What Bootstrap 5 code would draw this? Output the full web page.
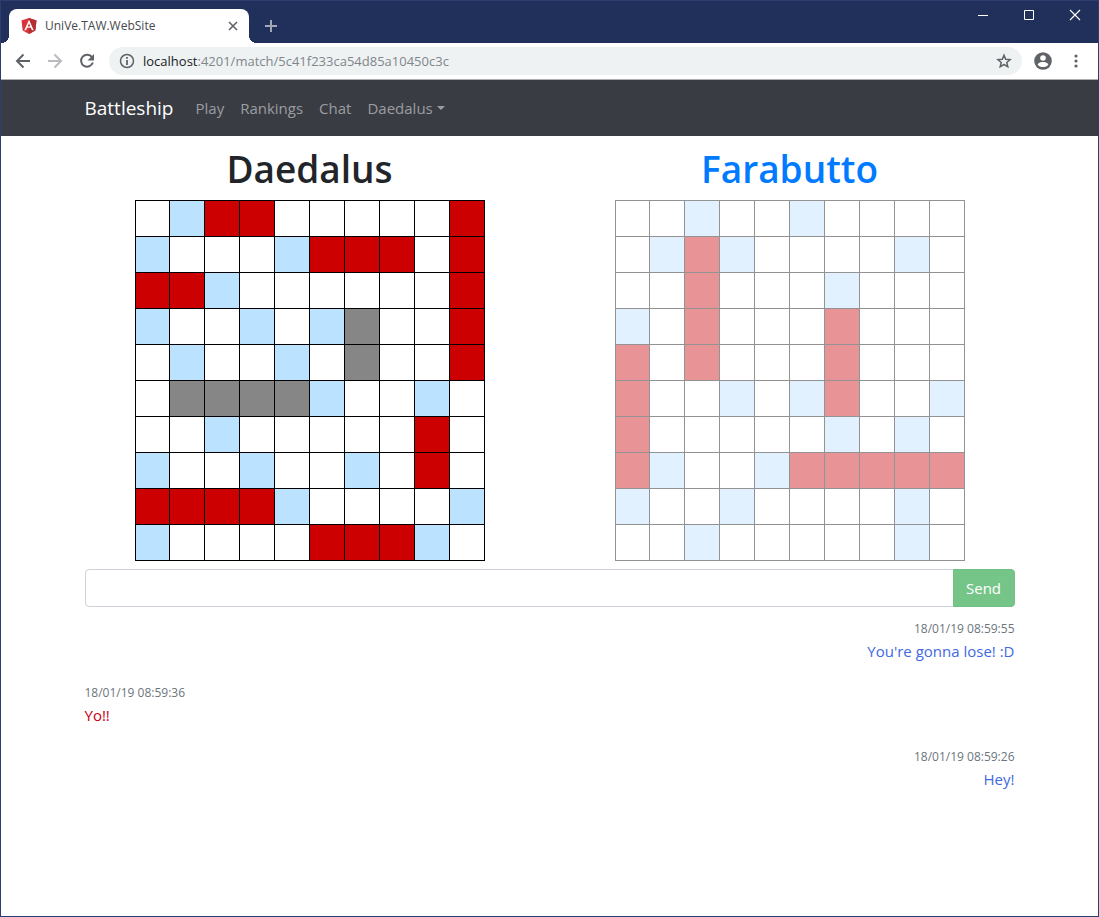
<!DOCTYPE html>
<html lang="en">
<head>
<meta charset="utf-8">
<meta name="viewport" content="width=device-width, initial-scale=1">
<title>UniVe.TAW.WebSite</title>
<link href="https://cdn.jsdelivr.net/npm/bootstrap@5.3.0/dist/css/bootstrap.min.css" rel="stylesheet">
<style>
  body { font-family: "Open Sans", "Noto Sans", sans-serif; font-size: 15px; line-height: 24px; color: #212529; }
  .window-frame { border: 1px solid #2c3d70; min-height: 100vh; }
  .titlebar { background: #212f5b; height: 42px; padding: 8px 8px 0; }
  .browser-tab { position: relative; width: 240px; height: 34px; border-radius: 8px 8px 0 0; padding: 0 10px 0 12px; font-size: 12px; color: #45494d; }
  .browser-tab::before, .browser-tab::after { content: ""; position: absolute; bottom: 0; width: 8px; height: 8px; }
  .browser-tab::before { left: -8px; background: radial-gradient(circle at 0 0, transparent 8px, #fff 8px); }
  .browser-tab::after { right: -8px; background: radial-gradient(circle at 100% 0, transparent 8px, #fff 8px); }
  .chrome-btn { border: 0; padding: 0; background: none; display: flex; flex: none; }
  .window-buttons { gap: 30px; height: 16px; padding-right: 7px; margin-top: -2px; }
  .toolbar { height: 37px; padding: 0 14px; border-bottom: 1px solid #adaeaf; }
  .address { height: 28px; margin: 0 12px 0 14px; border-radius: 14px; background: #eef2f3; padding: 0 10px; font-size: 13px; color: #80868b; }
  .address .host { color: #202124; }
  .page-col { max-width: 960px; padding: 0 15px; }
  .boards { --bs-gutter-x: 30px; }
  .site-nav { background: #393c43; min-height: 56px; }
  .site-nav .navbar-brand { font-size: 19px; line-height: 30px; color: #fff; margin-right: 14px; }
  .site-nav .nav-link { color: #9c9da1; }
  .player-name { font-size: 37px; line-height: 50px; font-weight: 600; margin-bottom: 6px; }
  .rival { color: #007bff; }
  .sea { border-collapse: collapse; table-layout: fixed; width: 350px; --line: #000; --water: #bbe3ff; --hit: #c00; --ship: #868686; }
  .sea td { height: 36px; padding: 0; border: 1px solid var(--line); }
  .sea td:first-child { width: 34px; }
  .sea-rival { --line: #939393; --water: #e1f1ff; --hit: #e89496; }
  .water { background: var(--water); }
  .hit { background: var(--hit); }
  .ship { background: var(--ship); }
  .chat-form .form-control { height: 38px; border-color: #ced4da; border-radius: 4px; }
  .chat-form .btn { width: 62px; padding: 0; font-size: 15px; border-radius: 4px; color: #fff; background: #76c588; border: 1px solid #6fc183; }
  .stamp { font-size: 12px; line-height: 1; color: #6c757d; }
  .mine { color: #4169e1; }
  .theirs { color: #c80010; }
</style>
</head>
<body>
<div class="window-frame">
  <header>
    <div class="titlebar d-flex">
      <div class="browser-tab bg-white d-flex align-items-center">
        <svg class="me-2" width="16" height="16" viewBox="0 0 16 16"><path fill="#dd3139" d="M8 0l7.500 2.600-1.200 10L8 16l-6.300-3.400L.5 2.600z"/><path fill="#b52e31" d="M8 0l7.500 2.600-1.200 10L8 16z"/><path fill="#fff" fill-rule="evenodd" d="M8 1.800L3.300 12.200h1.800l1-2.400h3.800l1 2.400h1.800zM8 5.200l1.300 3.200H6.700z"/></svg>
        <span class="flex-grow-1">UniVe.TAW.WebSite</span>
        <button class="chrome-btn" aria-label="Close tab"><svg width="12" height="12" viewBox="0 0 12 12" fill="none" stroke="#5f6368" stroke-width="1.600"><path d="M2 2l8 8M10 2l-8 8"/></svg></button>
      </div>
      <button class="chrome-btn align-items-center ms-3" aria-label="New tab"><svg width="12" height="12" viewBox="0 0 12 12" fill="none" stroke="#a3a8b5" stroke-width="2"><path d="M6 0v12M0 6h12"/></svg></button>
      <div class="window-buttons d-flex ms-auto">
        <button class="chrome-btn" aria-label="Minimize"><svg width="16" height="16" viewBox="0 0 16 16" stroke="#fff"><path d="M3 8.500h10"/></svg></button>
        <button class="chrome-btn" aria-label="Maximize"><svg width="16" height="16" viewBox="0 0 16 16" fill="none" stroke="#fff"><path d="M3.500 3.500h9v9h-9z"/></svg></button>
        <button class="chrome-btn" aria-label="Close"><svg width="16" height="16" viewBox="0 0 16 16" fill="none" stroke="#fff" stroke-width="1.200"><path d="M3 3l10 10M13 3L3 13"/></svg></button>
      </div>
    </div>
    <div class="toolbar bg-white d-flex align-items-center">
      <button class="chrome-btn me-3" aria-label="Back"><svg width="16" height="16" viewBox="0 0 16 16" fill="none" stroke="#5f6368" stroke-width="2"><path d="M15 8H2.500M8.500 1.500L2 8l6.500 6.500"/></svg></button>
      <button class="chrome-btn me-3" aria-label="Forward"><svg width="16" height="16" viewBox="0 0 16 16" fill="none" stroke="#b9bbbe" stroke-width="2"><path d="M1 8h12.500M7.500 1.500L14 8l-6.500 6.500"/></svg></button>
      <button class="chrome-btn" aria-label="Reload"><svg width="16" height="16" viewBox="0 0 16 16"><path fill="none" stroke="#5f6368" stroke-width="2" d="M13 4.200A6 6 0 1 0 13.800 9.500"/><path fill="#5f6368" d="M15 1v6.500H8.500z"/></svg></button>
      <div class="address d-flex align-items-center flex-grow-1">
        <svg class="me-2" width="16" height="16" viewBox="0 0 16 16"><circle cx="8" cy="8" r="6.500" fill="none" stroke="#5f6368" stroke-width="1.500"/><path fill="#5f6368" d="M7.100 7h1.800v5H7.100zM7.100 4h1.800v1.800H7.100z"/></svg>
        <span class="flex-grow-1"><span class="host">localhost</span>:4201/match/5c41f233ca54d85a10450c3c</span>
        <button class="chrome-btn" aria-label="Bookmark"><svg width="16" height="16" viewBox="0 0 16 16" fill="none" stroke="#5f6368" stroke-width="1.500"><path d="M8 2.200l1.700 4 4.400.4-3.300 2.900 1 4.300L8 11.500l-3.800 2.300 1-4.300-3.300-2.900 4.400-.4z"/></svg></button>
      </div>
      <button class="chrome-btn" aria-label="Profile"><svg width="18" height="18" viewBox="0 0 18 18"><circle cx="9" cy="9" r="8.800" fill="#5f6368"/><circle cx="9" cy="6" r="2.800" fill="#fff"/><path fill="#fff" d="M3.600 12.400C4.500 10.600 7.200 10 9 10s4.500.6 5.400 2.400C13.200 14.200 11.200 15 9 15s-4.200-.8-5.400-2.600z"/></svg></button>
      <button class="chrome-btn ms-3" aria-label="Menu"><svg width="16" height="16" viewBox="0 0 16 16" fill="#5f6368"><circle cx="8" cy="3" r="1.600"/><circle cx="8" cy="8" r="1.600"/><circle cx="8" cy="13" r="1.600"/></svg></button>
    </div>
  </header>

  <nav class="navbar navbar-expand site-nav py-2">
    <div class="container page-col">
      <a class="navbar-brand py-0" href="#">Battleship</a>
      <ul class="navbar-nav me-auto">
        <li class="nav-item"><a class="nav-link" href="#">Play</a></li>
        <li class="nav-item"><a class="nav-link" href="#">Rankings</a></li>
        <li class="nav-item"><a class="nav-link" href="#">Chat</a></li>
        <li class="nav-item dropdown"><a class="nav-link dropdown-toggle" href="#" role="button" data-bs-toggle="dropdown" aria-expanded="false">Daedalus</a></li>
      </ul>
    </div>
  </nav>

  <main class="container page-col pt-2">
    <div class="row boards">
      <section class="col-6">
        <h1 class="player-name text-center">Daedalus</h1>
        <table class="sea mx-auto mb-2" aria-label="Daedalus board" data-rows=".wrr.....r w...wrrr.r rrw......r w..w.wg..r .w..w.g..r .ggggw..w. ..w.....r. w..w..w.r. rrrrw....w w....rrrw."></table>
      </section>
      <section class="col-6">
        <h1 class="player-name rival text-center">Farabutto</h1>
        <table class="sea sea-rival mx-auto mb-2" aria-label="Farabutto board" data-rows="..w..w.... .wrw....w. ..r...w... w.r...r... r.r...r... r..w.wr..w r.....w.w. rw..wrrrrr w..w....w. ..w.....w."></table>
      </section>
    </div>
    <form class="chat-form input-group mb-2">
      <input type="text" class="form-control" aria-label="Message">
      <button type="button" class="btn">Send</button>
    </form>
    <div class="text-end mb-3"><div><span class="stamp">18/01/19 08:59:55</span></div><div class="mine">You're gonna lose! :D</div></div>
    <div class="mb-3"><div><span class="stamp">18/01/19 08:59:36</span></div><div class="theirs">Yo!!</div></div>
    <div class="text-end mb-3"><div><span class="stamp">18/01/19 08:59:26</span></div><div class="mine">Hey!</div></div>
  </main>
</div>
<script src="https://cdn.jsdelivr.net/npm/bootstrap@5.3.0/dist/js/bootstrap.bundle.min.js"></script>
<script>
  // w = missed shot, r = hit, g = ship still afloat
  const kinds = { w: "water", r: "hit", g: "ship" };
  document.querySelectorAll(".sea").forEach(table => {
    table.dataset.rows.split(" ").forEach(cells => {
      const row = table.insertRow();
      for (const c of cells) row.insertCell().className = kinds[c] || "";
    });
  });
</script>
</body>
</html>
